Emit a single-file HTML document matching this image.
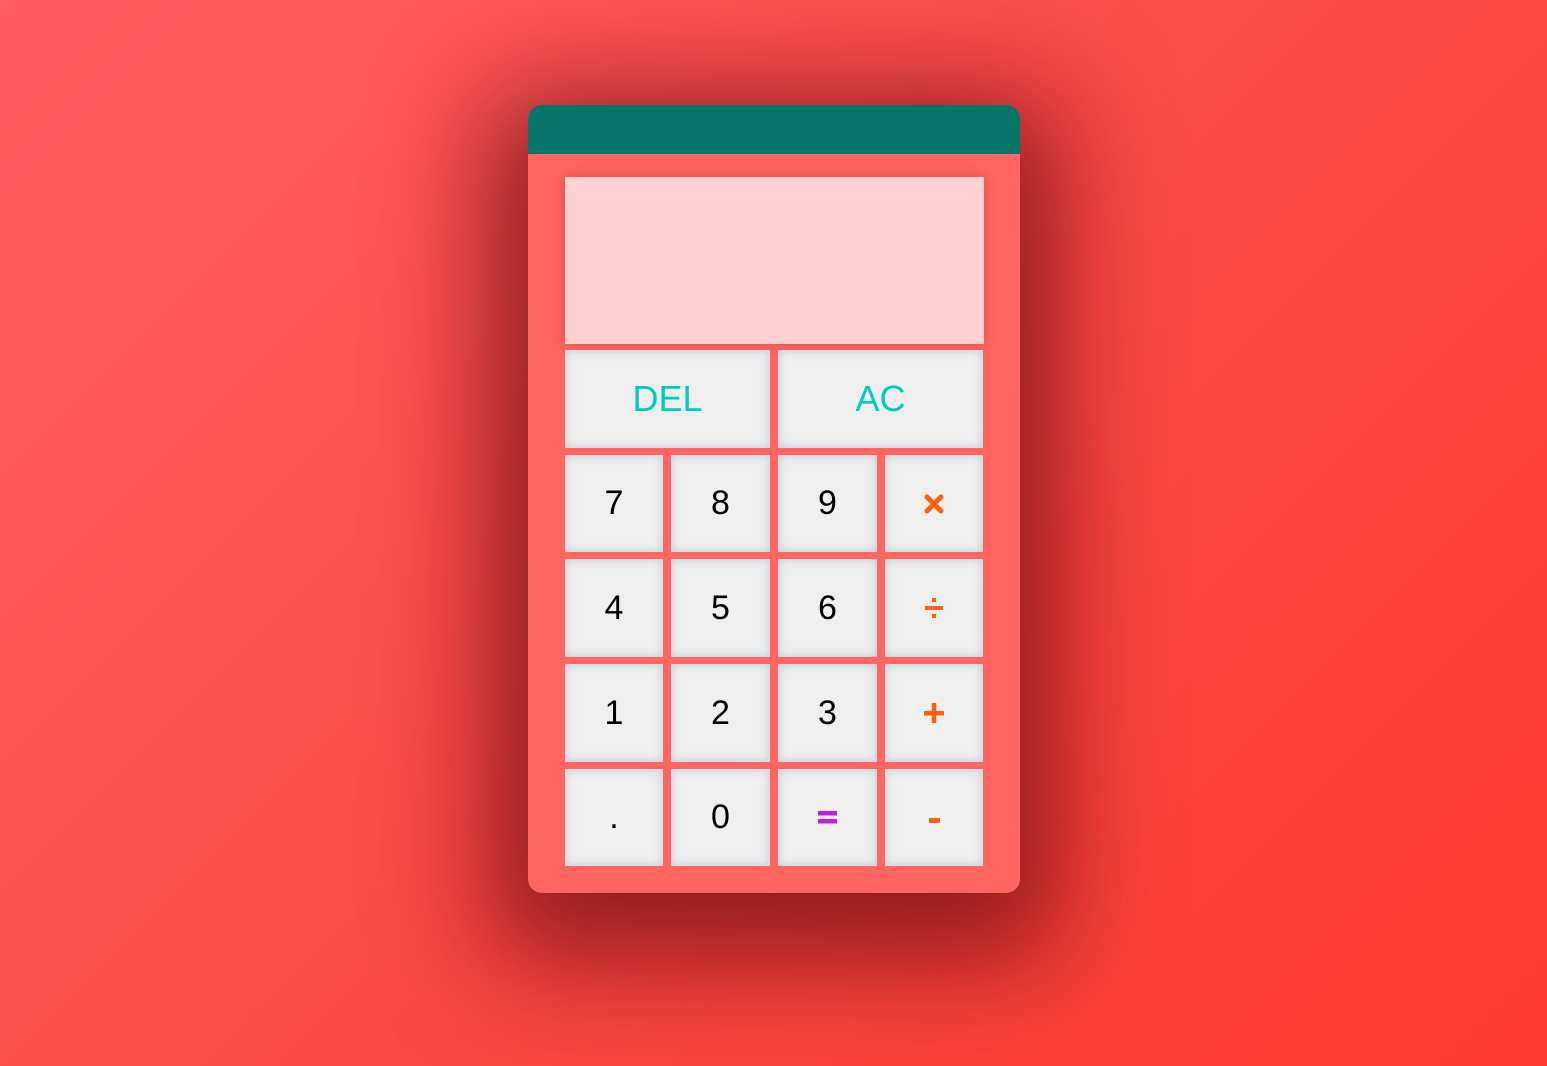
<!DOCTYPE html>
<html><head><meta charset="utf-8"><style>
html,body{margin:0;padding:0}
body{width:1547px;height:1066px;overflow:hidden;background:linear-gradient(135deg,#fe5f5f 0%,#fd4b48 50%,#ff3a30 100%);font-family:"Liberation Sans",sans-serif;position:relative}
.card{position:absolute;left:528px;top:105px;width:492px;height:788px;background:#ff6561;border-radius:14px;overflow:hidden;box-shadow:0 30px 110px 40px rgba(110,15,15,.75)}
.hdr{height:49px;background:#047568}
.disp{position:absolute;left:37px;top:72px;width:419px;height:167px;background:#ffd0cf;box-shadow:0 0 12px rgba(140,40,40,.35)}
.b{position:absolute;background:#efefef;box-shadow:inset 0 0 10px rgba(150,170,190,.55);display:flex;align-items:center;justify-content:center;font-size:34px;color:#000}
.t{color:#00ccbb;font-size:36px}
svg{display:block}
</style></head><body>
<div class="card">
<div class="hdr"></div>
<div class="disp"></div>
<div class="b t" style="left:37px;top:245px;width:205px;height:98px">DEL</div>
<div class="b t" style="left:250px;top:245px;width:205px;height:98px">AC</div>

<div class="b" style="left:37px;top:350px;width:98px;height:97px">7</div>
<div class="b" style="left:143px;top:350px;width:99px;height:97px">8</div>
<div class="b" style="left:250px;top:350px;width:99px;height:97px">9</div>
<div class="b" style="left:357px;top:350px;width:98px;height:97px"><svg width="20" height="20" viewBox="0 0 20 20"><path d="M3 3L17 17M17 3L3 17" stroke="#ff6010" stroke-width="5" stroke-linecap="round"/></svg></div>

<div class="b" style="left:37px;top:454px;width:98px;height:98px">4</div>
<div class="b" style="left:143px;top:454px;width:99px;height:98px">5</div>
<div class="b" style="left:250px;top:454px;width:99px;height:98px">6</div>
<div class="b" style="left:357px;top:454px;width:98px;height:98px"><svg width="20" height="20" viewBox="0 0 20 20"><rect x="1" y="8" width="18" height="4" fill="#ff6010"/><rect x="8" y="0" width="4" height="4" fill="#ff6010"/><rect x="8" y="16" width="4" height="4" fill="#ff6010"/></svg></div>

<div class="b" style="left:37px;top:559px;width:98px;height:98px">1</div>
<div class="b" style="left:143px;top:559px;width:99px;height:98px">2</div>
<div class="b" style="left:250px;top:559px;width:99px;height:98px">3</div>
<div class="b" style="left:357px;top:559px;width:98px;height:98px"><svg width="20" height="20" viewBox="0 0 20 20"><rect x="0" y="8" width="20" height="4.5" fill="#ff6010"/><rect x="7.75" y="0" width="4.5" height="20" fill="#ff6010"/></svg></div>

<div class="b" style="left:37px;top:664px;width:98px;height:97px">.</div>
<div class="b" style="left:143px;top:664px;width:99px;height:97px">0</div>
<div class="b" style="left:250px;top:664px;width:99px;height:97px"><svg width="19" height="13" viewBox="0 0 19 13"><rect x="0" y="0" width="19" height="4.5" fill="#c01ee0"/><rect x="0" y="8" width="19" height="4.5" fill="#c01ee0"/></svg></div>
<div class="b" style="left:357px;top:664px;width:98px;height:97px"><svg width="11" height="5" viewBox="0 0 11 5" style="margin-top:6px"><rect x="0" y="0" width="11" height="5" fill="#ff6010"/></svg></div>
</div>
</body></html>
